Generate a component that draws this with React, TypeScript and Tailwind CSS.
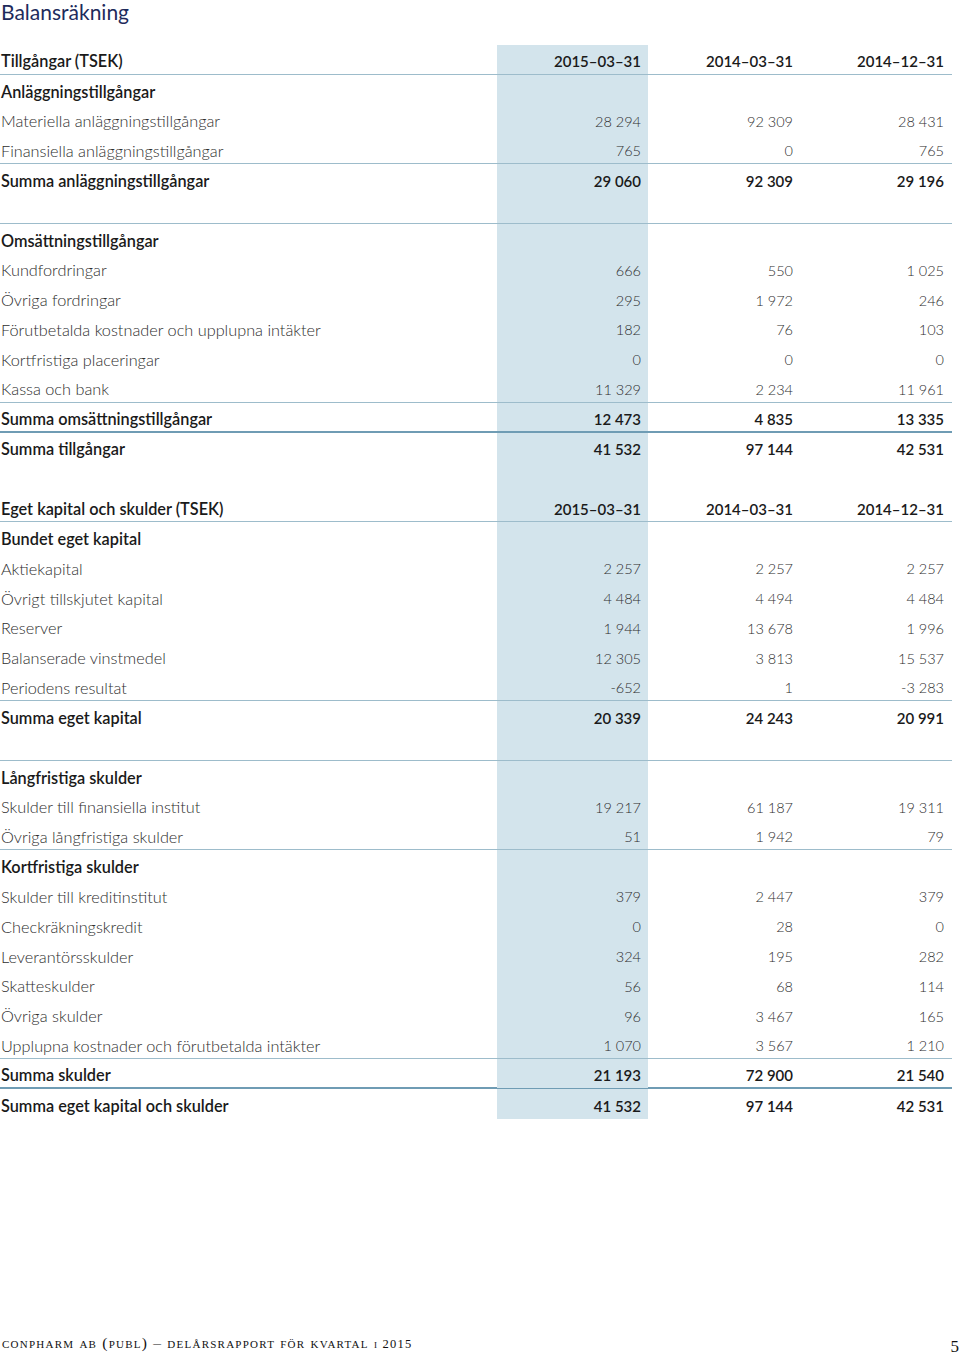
import React from "react";

type Row = {
  label?: string;
  v?: [string, string, string];
  kind: "header" | "section" | "item" | "sum" | "empty";
  line?: "light" | "dark";
};

const rows: Row[] = [
  { label: "Tillgångar (TSEK)", v: ["2015–03–31", "2014–03–31", "2014–12–31"], kind: "header", line: "light" },
  { label: "Anläggningstillgångar", kind: "section" },
  { label: "Materiella anläggningstillgångar", v: ["28 294", "92 309", "28 431"], kind: "item" },
  { label: "Finansiella anläggningstillgångar", v: ["765", "0", "765"], kind: "item", line: "light" },
  { label: "Summa anläggningstillgångar", v: ["29 060", "92 309", "29 196"], kind: "sum" },
  { kind: "empty", line: "light" },
  { label: "Omsättningstillgångar", kind: "section" },
  { label: "Kundfordringar", v: ["666", "550", "1 025"], kind: "item" },
  { label: "Övriga fordringar", v: ["295", "1 972", "246"], kind: "item" },
  { label: "Förutbetalda kostnader och upplupna intäkter", v: ["182", "76", "103"], kind: "item" },
  { label: "Kortfristiga placeringar", v: ["0", "0", "0"], kind: "item" },
  { label: "Kassa och bank", v: ["11 329", "2 234", "11 961"], kind: "item", line: "light" },
  { label: "Summa omsättningstillgångar", v: ["12 473", "4 835", "13 335"], kind: "sum", line: "dark" },
  { label: "Summa tillgångar", v: ["41 532", "97 144", "42 531"], kind: "sum" },
  { kind: "empty" },
  { label: "Eget kapital och skulder (TSEK)", v: ["2015–03–31", "2014–03–31", "2014–12–31"], kind: "header", line: "light" },
  { label: "Bundet eget kapital", kind: "section" },
  { label: "Aktiekapital", v: ["2 257", "2 257", "2 257"], kind: "item" },
  { label: "Övrigt tillskjutet kapital", v: ["4 484", "4 494", "4 484"], kind: "item" },
  { label: "Reserver", v: ["1 944", "13 678", "1 996"], kind: "item" },
  { label: "Balanserade vinstmedel", v: ["12 305", "3 813", "15 537"], kind: "item" },
  { label: "Periodens resultat", v: ["-652", "1", "-3 283"], kind: "item", line: "light" },
  { label: "Summa eget kapital", v: ["20 339", "24 243", "20 991"], kind: "sum" },
  { kind: "empty", line: "light" },
  { label: "Långfristiga skulder", kind: "section" },
  { label: "Skulder till finansiella institut", v: ["19 217", "61 187", "19 311"], kind: "item" },
  { label: "Övriga långfristiga skulder", v: ["51", "1 942", "79"], kind: "item", line: "light" },
  { label: "Kortfristiga skulder", kind: "section" },
  { label: "Skulder till kreditinstitut", v: ["379", "2 447", "379"], kind: "item" },
  { label: "Checkräkningskredit", v: ["0", "28", "0"], kind: "item" },
  { label: "Leverantörsskulder", v: ["324", "195", "282"], kind: "item" },
  { label: "Skatteskulder", v: ["56", "68", "114"], kind: "item" },
  { label: "Övriga skulder", v: ["96", "3 467", "165"], kind: "item" },
  { label: "Upplupna kostnader och förutbetalda intäkter", v: ["1 070", "3 567", "1 210"], kind: "item", line: "light" },
  { label: "Summa skulder", v: ["21 193", "72 900", "21 540"], kind: "sum", line: "dark" },
  { label: "Summa eget kapital och skulder", v: ["41 532", "97 144", "42 531"], kind: "sum" },
];

function TableRow({ r }: { r: Row }) {
  const border =
    r.line === "light"
      ? "border-b border-[#9dbccb]"
      : r.line === "dark"
      ? "border-b-2 border-[#6f9cb4]"
      : "";
  const bold = r.kind === "header" || r.kind === "section" || r.kind === "sum";
  const textCls = bold
    ? "font-semibold text-[#1a1a1a]"
    : "font-light text-[#2e2e2e]";
  const numSize = bold ? "text-[15px]" : "text-[14.5px]";
  return (
    <div className={`grid grid-cols-[497px_151px_152px_152px] h-[29.83px] ${border}`}>
      <div className={`flex items-center pt-[4px] pl-[1px] whitespace-nowrap text-[16.3px] ${textCls}`}>
        {r.label ?? ""}
      </div>
      <div className={`flex items-center justify-end pt-[4px] pr-[7px] bg-[#d3e4ec] whitespace-nowrap ${numSize} ${textCls}`}>
        {r.v?.[0] ?? ""}
      </div>
      <div className={`flex items-center justify-end pt-[4px] pr-[7px] whitespace-nowrap ${numSize} ${textCls}`}>
        {r.v?.[1] ?? ""}
      </div>
      <div className={`flex items-center justify-end pt-[4px] pr-[8px] whitespace-nowrap ${numSize} ${textCls}`}>
        {r.v?.[2] ?? ""}
      </div>
    </div>
  );
}

export default function App() {
  return (
    <div className="w-[960px] h-[1357px] bg-white relative overflow-hidden font-['Lato','Noto_Sans',sans-serif]">
      <h1 className="h-[24px] text-[21px] leading-[24px] text-[#1e2b5c] pl-[1px] font-normal">
        Balansräkning
      </h1>
      <div className="mt-[21px] w-[952px]">
        {rows.map((r, i) => (
          <TableRow key={i} r={r} />
        ))}
      </div>
      <div className="mt-[215px] flex justify-between items-end pl-[2px] pr-[1px] font-['Liberation_Serif',serif]">
        <span className="text-[15.5px] tracking-[0.08em] [font-variant:small-caps] text-[#111] leading-none whitespace-nowrap">
          conpharm ab (publ) – delårsrapport för kvartal{" "}
          <span className="text-[12.5px]">i 2015</span>
        </span>
        <span className="text-[17px] leading-none text-[#111] translate-y-[4px]">5</span>
      </div>
    </div>
  );
}
